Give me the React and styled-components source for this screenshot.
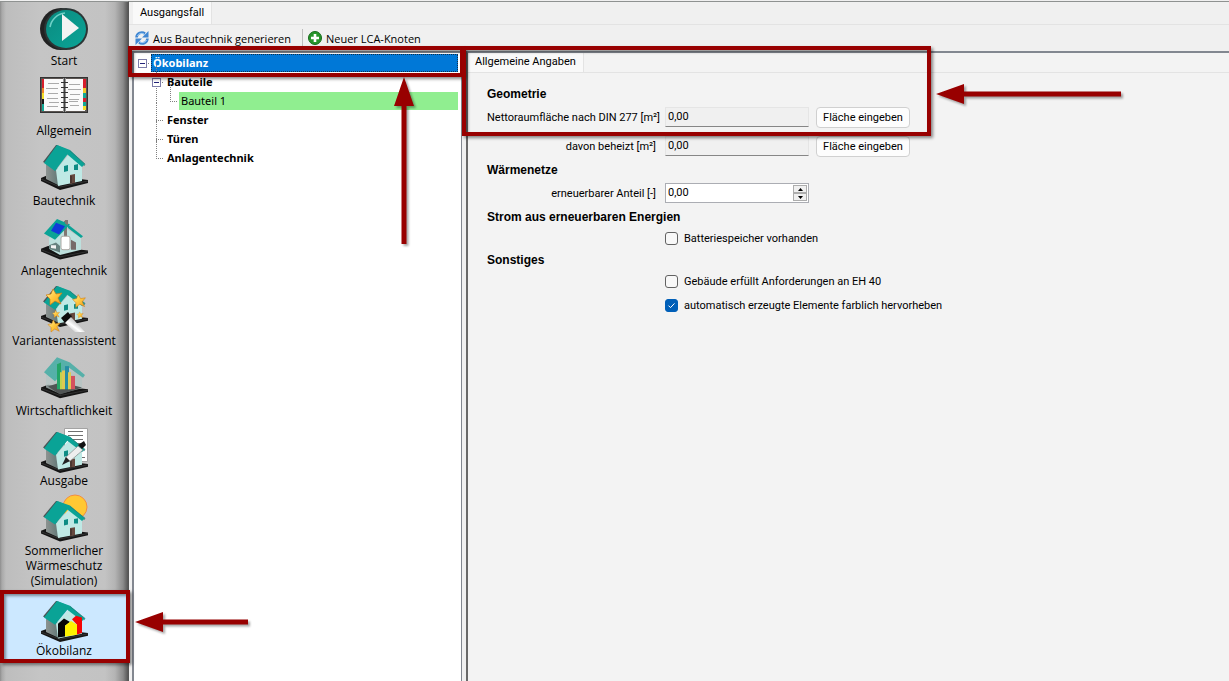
import React, { useState } from 'react';
import styled, { createGlobalStyle } from 'styled-components';

const GlobalStyle = createGlobalStyle`
  * {
    box-sizing: border-box;
  }
  body {
    margin: 0;
    background: #f0f0f0;
    color: #000;
    font-family: 'Open Sans', 'Noto Sans', sans-serif;
    font-size: 12px;
    overflow: hidden;
  }
  button,
  input {
    font: inherit;
    color: inherit;
  }
`;

// Layout
const Window = styled.div`
  display: flex;
  min-height: 100vh;
  border-top: 1px solid #f0f0f0;
`;

const Sidebar = styled.nav`
  flex: 0 0 129px;
  border-top: 1px solid #8f9291;
  border-right: 1px solid #555;
  background: linear-gradient(
    to right,
    #8e8e8e 0,
    #a9a9a9 2px,
    #bdbdbd 6px,
    #c5c5c5 40px,
    #c3c3c3 105px,
    #b4b4b4 115px,
    #8b8b8b 123px,
    #555 128px
  );
`;

const Main = styled.main`
  flex: 1;
  min-width: 0;
  display: flex;
  flex-direction: column;
  border-top: 1px solid #8f9291;
`;

const Panels = styled.div`
  flex: 1;
  display: flex;
  gap: 4px;
  padding-left: 3px;
`;

// Sidebar entries
const NavItem = styled.button`
  position: relative;
  display: flex;
  flex-direction: column;
  align-items: center;
  width: 100%;
  padding: 4px 0;
  border: none;
  background: ${props => (props.$active ? '#cce8ff' : 'transparent')};
  line-height: 15px;
  white-space: pre-line;

  svg {
    display: block;
    overflow: visible;
  }
`;

// Red marker frames and arrows
const Frame = styled.span`
  position: absolute;
  inset: ${props => props.$inset};
  width: ${props => props.$width || 'auto'};
  height: ${props => props.$height || 'auto'};
  z-index: 2;
  border: 4px solid #980000;
  box-shadow: 2px 2px 3px rgba(0, 0, 0, 0.45), inset 2px 2px 3px rgba(0, 0, 0, 0.4);
  pointer-events: none;
`;

const ArrowSvg = styled.svg`
  position: absolute;
  left: ${props => props.$left};
  top: ${props => props.$top};
  z-index: 3;
  overflow: visible;
  pointer-events: none;
  filter: drop-shadow(2px 2px 1px rgba(0, 0, 0, 0.35));
`;

// Tabs and toolbar
const TabBar = styled.div`
  display: flex;
  height: ${props => props.$height};
  padding-left: ${props => props.$indent};
  border-bottom: 1px solid #e3e3e3;
`;

const Tab = styled.button`
  padding: 0 7px 2px;
  border: none;
  border-right: 1px solid #e3e3e3;
  background: #f9f9f9;
  font-family: Roboto, 'Liberation Sans', sans-serif;
  font-size: 11px;
`;

const Toolbar = styled.div`
  display: flex;
  align-items: center;
  height: 26px;
  padding-left: 6px;
`;

const ToolButton = styled.button`
  display: flex;
  align-items: center;
  gap: 4px;
  padding: 0;
  border: none;
  background: transparent;
  font-size: 11px;
  white-space: nowrap;
`;

const ToolDivider = styled.span`
  width: 1px;
  height: 18px;
  margin: 0 5px 0 11px;
  background: #bdbdbd;
`;

// Tree
const TreePanel = styled.section`
  flex: 0 0 330px;
  padding-top: 1px;
  border: 2px solid #828790;
  border-bottom: none;
  border-right-width: 1px;
  background: #fff;
`;

const TreeList = styled.ul`
  list-style: none;
  margin: 0;
  padding: 0 0 0 ${props => (props.$nested ? '14px' : '0')};
`;

const TreeNode = styled.li`
  position: relative;

  &::before {
    content: '';
    position: absolute;
    left: 8px;
    top: 9px;
    width: 7px;
    border-top: 1px dotted #808080;
  }

  ul > &::after {
    content: '';
    position: absolute;
    left: 8px;
    top: -8px;
    height: 100%;
    border-left: 1px dotted #808080;
    display: ${props => (props.$root ? 'none' : 'block')};
  }

  ul > &:last-child::after {
    height: 18px;
  }
`;

const TreeRow = styled.div`
  position: relative;
  display: flex;
  align-items: center;
  height: 19px;
  padding: 0 3px 1px 4px;
`;

const Expander = styled.button`
  position: relative;
  z-index: 1;
  width: 9px;
  height: 9px;
  margin-right: 4px;
  padding: 0;
  border: 1px solid #7c7ca8;
  background: linear-gradient(#24247a, #24247a) center / 5px 1px no-repeat #fff;
`;

const LeafSpace = styled.span`
  width: 13px;
`;

const TreeLabel = styled.span`
  flex: 1;
  padding: 0 2px;
  line-height: 18px;
  font-family: 'Noto Sans', sans-serif;
  font-size: 11px;
  font-weight: ${props => (props.$bold ? 700 : 400)};
  color: ${props => (props.$selected ? '#fff' : '#000')};
  background: ${props => (props.$selected ? '#0078d7' : props.$marked ? '#90ee90' : 'transparent')};
  outline: ${props => (props.$selected ? '1px dotted #10304e' : 'none')};
  outline-offset: -1px;
`;

// Detail form
const DetailPanel = styled.section`
  position: relative;
  flex: 1;
  min-width: 0;
  border-top: 2px solid #828790;
  border-left: 2px solid #696969;
  background: #f3f3f3;
`;

const Form = styled.form`
  display: flex;
  flex-direction: column;
  gap: 3px;
  padding: 11px 19px;
  font-family: Roboto, 'Liberation Sans', sans-serif;
  font-size: 11px;
`;

const Group = styled.fieldset`
  display: flex;
  flex-direction: column;
  gap: ${props => props.$gap || '7px'};
  margin: 0;
  padding: 0;
  border: none;
  min-width: 0;
`;

const GroupTitle = styled.legend`
  padding: 0;
  margin-bottom: 2px;
  font-family: 'Liberation Sans', Arial, sans-serif;
  font-size: 12px;
  font-weight: 700;
  line-height: 20px;
`;

const FieldRow = styled.div`
  display: grid;
  grid-template-columns: 171px 144px 94px;
  column-gap: 7px;
  align-items: center;
  height: 22px;
`;

const FieldLabel = styled.label`
  padding-right: 2px;
  text-align: right;
  white-space: nowrap;
`;

const ReadonlyInput = styled.input`
  width: 100%;
  height: 20px;
  padding: 0 2px 1px;
  border: 1px solid #e5e5e5;
  border-bottom-color: #868686;
  background: #f0f0f0;
  outline: none;
`;

const FormButton = styled.button`
  height: 21px;
  padding: 0;
  border: 1px solid #d0d0d0;
  border-radius: 4px;
  background: #fdfdfd;
  white-space: nowrap;
`;

const SpinBox = styled.div`
  display: flex;
  height: 20px;
  padding: 1px;
  border: 1px solid #abadb3;
  background: #fff;
`;

const SpinInput = styled.input`
  flex: 1;
  min-width: 0;
  padding: 0 0 2px 1px;
  border: none;
  background: transparent;
  outline: none;
`;

const SpinButtons = styled.div`
  display: grid;
  grid-template-rows: 1fr 1fr;
  width: 14px;
`;

const SpinButton = styled.button`
  display: flex;
  align-items: center;
  justify-content: center;
  padding: 0;
  border: 1px solid #adadad;
  background: #f0f0f0;
`;

const CheckLabel = styled.label`
  display: flex;
  align-items: center;
  gap: 6px;
  height: 18px;
  padding-left: 178px;
`;

const CheckBox = styled.input`
  appearance: none;
  width: 13px;
  height: 13px;
  margin: 0;
  border: 1px solid #626262;
  border-radius: 3px;
  background: #f8f8f8;

  &:checked {
    border-color: #005fb8;
    background: #005fb8
      url("data:image/svg+xml,%3Csvg xmlns='http://www.w3.org/2000/svg' viewBox='0 0 11 11'%3E%3Cpath d='M2.5 5.6l2 2 4-4.2' fill='none' stroke='white'/%3E%3C/svg%3E");
  }
`;

// Icons
const HouseBase = () => (
  <>
    <path d="M1 32 8 29 48 34V37L20 44 1 35Z" fill="#151515" />
    <path d="M1 33 20 41 48 35" fill="none" stroke="#3b3b3b" strokeWidth="0.8" />
  </>
);

const HouseBody = () => (
  <>
    <path d="M6 17 20 23V40L6 33Z" fill="url(#wall)" />
    <path d="M16 24 30 7 42 19V35L18 40Z" fill="#bfe9e5" />
    <path d="M3 16 16 -1 18 -1 5 17Z" fill="#4b5355" />
    <path d="M17 -1 30 5 15 25 4 17Z" fill="#0aa396" />
    <path d="M17 -1 30 4 45 18 42 21 28 9Z" fill="#0aa396" />
    <path d="M30 5 45 18 44 20" fill="none" stroke="#2a7771" strokeWidth="0.7" />
  </>
);

const HouseOpenings = () => (
  <>
    <path d="M24 20 28 19V25L24 26Z" fill="#0d8c84" />
    <path d="M34 19 38 18V24L34 24Z" fill="#0d8c84" />
    <path d="M30 29 35 28V37L30 38Z" fill="#66493f" />
    <path d="M31 30V37" stroke="#2d2422" />
  </>
);

const House = () => (
  <>
    <HouseBase />
    <HouseBody />
    <HouseOpenings />
  </>
);

const Star = ({ x, y, s }) => (
  <path
    transform={`translate(${x} ${y}) scale(${s})`}
    d="M-1 -8 2 -3 8 -4 4 1 7 7 1 4 -4 8 -4 2 -8 -2 -3 -3Z"
    fill="url(#gold)"
    stroke="#cf7c13"
    strokeWidth="0.7"
  />
);

const ICONS = {
  start: (
    <>
      <ellipse cx="21" cy="23" rx="21" ry="21" fill="#222" />
      <ellipse cx="26" cy="23" rx="22" ry="21" fill="#2c3535" />
      <ellipse cx="26" cy="23" rx="20" ry="19" fill="url(#play)" />
      <path d="M10 21A17 17 0 0 1 25 7" fill="none" stroke="#6fd1c7" strokeWidth="1.6" />
      <path d="M22 8 39 22 22 35Z" fill="#f3f3f3" />
    </>
  ),
  allgemein: (
    <g transform="translate(0 -3)">
      <rect x="0.5" y="4.5" width="47" height="35" fill="#5b5552" stroke="#333" />
      <rect x="3" y="6" width="42" height="32" fill="#fafafa" />
      <path d="M2 6h2v9H2z" fill="#d81e2c" />
      <path d="M2 15h2v5H2z" fill="#f08326" />
      <path d="M2 20h2v6H2z" fill="#f4df28" />
      <path d="M2 26h2v5H2z" fill="#191919" />
      <path d="M2 31h2v7H2z" fill="#13a896" />
      <path d="M43 6h3v9h-3z" fill="#d81e2c" />
      <path d="M43 15h3v5h-3z" fill="#f4c928" />
      <path d="M43 20h3v5h-3z" fill="#13a896" />
      <path d="M43 25h3v4h-3z" fill="#d81e2c" />
      <path d="M43 29h3v4h-3z" fill="#13a896" />
      <path d="M43 33h3v4h-3z" fill="#f4df28" />
      <path d="M8 10.5h11M6 15.5h12M8 20.5h10M7 25.5h11M9 29.5h10M7 33.5h11M29 11.5h11M28 16.5h13M30 21.5h10M29 26.5h10M29 28.5h9M30 32.5h9" stroke="#aaa" />
      <path d="M24.5 5V39" stroke="#999" strokeWidth="3" />
      <path d="M24.5 5V39" stroke="#444" />
      <path d="M21 9.5h7M21 14.5h7M21 19.5h7M21 24.5h7M21 29.5h7M21 34.5h7" stroke="#333" />
    </g>
  ),
  bautechnik: <House />,
  anlagentechnik: (
    <g transform="translate(0 4) scale(1 0.9)">
      <HouseBase />
      <path d="M9 20 24 8 41 20V33L20 39 9 32Z" fill="#bde0dd" />
      <path d="M9 28 16 25 20 29V36L9 32Z" fill="#66817f" />
      <path d="M11 28h5v4l-5-1z" fill="#f4f4f4" />
      <path d="M24 1h3v20h-3z" fill="#827773" />
      <path d="M31 22 36 25V33L31 33Z" fill="#776b69" />
      <path d="M17 -1 30 5 15 22 4 15Z" fill="#0aa396" />
      <path d="M28 5 43 18 41 20 28 9Z" fill="#0aa396" />
      <path d="M16 3 25 7 19 16 11 12Z" fill="#1139d9" />
      <rect x="21" y="18" width="9" height="15" rx="2" fill="#fff" stroke="#a9a39f" />
      <path d="M25 0h3v6l-3-2z" fill="#827773" />
    </g>
  ),
  varianten: (
    <>
      <g transform="translate(0 1) scale(1 0.91)">
        <House />
      </g>
      <Star x={14} y={11} s={1} />
      <Star x={39} y={15} s={0.8} />
      <Star x={16} y={28} s={0.45} />
      <Star x={40} y={29} s={0.4} />
      <Star x={14} y={40} s={0.75} />
      <path d="M21 32 28 26 32 31 25 37Z" fill="#0c0c0c" />
      <path d="M25 37 31 31 45 46H35Z" fill="url(#wand)" />
    </>
  ),
  wirtschaft: (
    <g transform="translate(0 3) scale(1 0.89)">
      <HouseBase />
      <path d="M6 17 18 8 42 18V33L20 39 6 32Z" fill="#b4c4c3" opacity="0.7" />
      <path d="M17 -2 30 4 45 18 43 21 28 9 15 25 4 15Z" fill="#43ada5" opacity="0.85" />
      <path d="M8 31 21 26 42 32 20 40Z" fill="#505555" />
      <path d="M17 6 21 4V34H17Z" fill="#22a567" />
      <path d="M20 15h2v19h-2z" fill="#c4d34c" />
      <path d="M25 8h4v26h-4z" fill="#258da4" />
      <path d="M22 13h3v21h-3zM28 15h3v19h-3z" fill="#dec953" />
      <path d="M31 19h4v15h-4z" fill="#d5515e" />
    </g>
  ),
  ausgabe: (
    <>
      <path d="M24.5 2.5h23v33h-23z" fill="#fff" stroke="#a3a3a3" />
      <path d="M28 5.5h15M28 9.5h15M28 13.5h15M34 17.5h9M38 31.5h7" stroke="#6f6f6f" />
      <g transform="translate(0 7) scale(1 0.91)">
        <House />
      </g>
      <path d="M38 20 43 24 29 36 25 32Z" fill="#eee" stroke="#777" strokeWidth="0.6" />
      <path d="M38 19 44 15 46 19 42 23Z" fill="#111" />
      <path d="M26 31 30 35 22 39Z" fill="#222" />
    </>
  ),
  sommer: (
    <>
      <circle cx="35" cy="11" r="12" fill="#ffc833" stroke="#f28d42" />
      <g transform="translate(0 6) scale(1 0.9)">
        <House />
      </g>
    </>
  ),
  oekobilanz: (
    <g transform="translate(0 6) scale(1 0.91)">
      <HouseBase />
      <HouseBody />
      <path d="M18 24 24 18 30 22 25 26V38L18 39Z" fill="#060606" />
      <path d="M32 19 36 15 42 17V34L36 36 37 25Z" fill="#f40505" />
      <path d="M25 26 31 21 37 25V36L25 38Z" fill="#fff200" />
    </g>
  ),
};

const DefsSvg = styled.svg`
  position: absolute;
`;

const IconDefs = () => (
  <DefsSvg width="0" height="0" aria-hidden="true">
    <defs>
      <linearGradient id="wall">
        <stop offset="0" stopColor="#8d9391" />
        <stop offset="1" stopColor="#5d7573" />
      </linearGradient>
      <linearGradient id="gold" x2="1" y2="1">
        <stop offset="0" stopColor="#fff3a2" />
        <stop offset="0.5" stopColor="#ffc83d" />
        <stop offset="1" stopColor="#ee9a22" />
      </linearGradient>
      <linearGradient id="wand" x1="0" y1="1" x2="1" y2="0">
        <stop offset="0" stopColor="#999" />
        <stop offset="0.4" stopColor="#fff" />
        <stop offset="1" stopColor="#666" />
      </linearGradient>
      <linearGradient id="play" x2="1" y2="1">
        <stop offset="0" stopColor="#0b8a7f" />
        <stop offset="1" stopColor="#0aa497" />
      </linearGradient>
    </defs>
  </DefsSvg>
);

const RefreshIcon = () => (
  <svg width="14" height="14" viewBox="0 0 14 14">
    <path d="M1.5 6.5A5.3 5.3 0 0 1 10 2.6" fill="none" stroke="#3f86d2" strokeWidth="2.6" />
    <path d="M13.5 0V6.5H7Z" fill="#3f86d2" />
    <path d="M12.5 7.5A5.3 5.3 0 0 1 4 11.4" fill="none" stroke="#3f86d2" strokeWidth="2.6" />
    <path d="M0.5 14V7.5H7Z" fill="#3f86d2" />
    <path d="M2.5 5A4.5 4.5 0 0 1 9 3M11.5 9A4.5 4.5 0 0 1 5 11" fill="none" stroke="#a9d2f7" />
  </svg>
);

const PlusIcon = () => (
  <svg width="14" height="14" viewBox="0 0 14 14">
    <circle cx="7" cy="7" r="6.5" fill="#27952a" stroke="#176b1d" />
    <path d="M7 3V11M3 7H11" stroke="#fff" strokeWidth="2.6" />
  </svg>
);

const LeftArrow = ({ length, left, top }) => (
  <ArrowSvg $left={left} $top={top} width={length} height="20" aria-hidden="true">
    <path d={`M0 10 28 0V7.5H${length}V12.5H28V20Z`} fill="#980000" />
  </ArrowSvg>
);

const UpArrow = ({ length, left, top }) => (
  <ArrowSvg $left={left} $top={top} width="20" height={length} aria-hidden="true">
    <path d={`M10 0 20 29H12.5V${length}H7.5V29H0Z`} fill="#980000" />
  </ArrowSvg>
);

const NAV_ITEMS = [
  { id: 'start', label: 'Start' },
  { id: 'allgemein', label: 'Allgemein' },
  { id: 'bautechnik', label: 'Bautechnik' },
  { id: 'anlagentechnik', label: 'Anlagentechnik' },
  { id: 'varianten', label: 'Variantenassistent' },
  { id: 'wirtschaft', label: 'Wirtschaftlichkeit' },
  { id: 'ausgabe', label: 'Ausgabe' },
  { id: 'sommer', label: 'Sommerlicher\nWärmeschutz\n(Simulation)' },
  { id: 'oekobilanz', label: 'Ökobilanz', active: true },
];

const TREE = {
  label: 'Ökobilanz',
  bold: true,
  selected: true,
  children: [
    { label: 'Bauteile', bold: true, children: [{ label: 'Bauteil 1', marked: true }] },
    { label: 'Fenster', bold: true },
    { label: 'Türen', bold: true },
    { label: 'Anlagentechnik', bold: true },
  ],
};

function TreeItem({ node, root }) {
  const [open, setOpen] = useState(true);

  return (
    <TreeNode $root={root}>
      <TreeRow>
        {node.children ? (
          <Expander type="button" aria-label={node.label} aria-expanded={open} onClick={() => setOpen(!open)} />
        ) : (
          <LeafSpace />
        )}
        <TreeLabel $bold={node.bold} $selected={node.selected} $marked={node.marked}>
          {node.label}
        </TreeLabel>
        {node.selected && (
          <>
            <Frame $inset="-8px -3px -4px -6px" />
            <UpArrow left="260px" top="23px" length={167} />
          </>
        )}
      </TreeRow>
      {node.children && open && (
        <TreeList $nested>
          {node.children.map(child => (
            <TreeItem key={child.label} node={child} />
          ))}
        </TreeList>
      )}
    </TreeNode>
  );
}

function AreaField({ id, label }) {
  return (
    <FieldRow>
      <FieldLabel htmlFor={id}>{label}</FieldLabel>
      <ReadonlyInput id={id} value="0,00" readOnly />
      <FormButton type="button">Fläche eingeben</FormButton>
    </FieldRow>
  );
}

function App() {
  const [share, setShare] = useState('0,00');

  const stepShare = (step) => {
    const value = Math.max(0, parseFloat(share.replace(',', '.')) + step);
    setShare(value.toFixed(2).replace('.', ','));
  };

  return (
    <Window>
      <GlobalStyle />
      <IconDefs />
      <Sidebar>
        {NAV_ITEMS.map(item => (
          <NavItem key={item.id} type="button" $active={item.active}>
            <svg width="48" height="47" viewBox="0 0 48 47" aria-hidden="true">
              {ICONS[item.id]}
            </svg>
            {item.label}
            {item.active && (
              <>
                <Frame $inset="-2px -2px -1px 0" />
                <LeftArrow left="135px" top="20px" length={113} />
              </>
            )}
          </NavItem>
        ))}
      </Sidebar>

      <Main>
        <TabBar $height="23px" $indent="4px">
          <Tab type="button">Ausgangsfall</Tab>
        </TabBar>
        <Toolbar>
          <ToolButton type="button"><RefreshIcon />Aus Bautechnik generieren</ToolButton>
          <ToolDivider />
          <ToolButton type="button"><PlusIcon />Neuer LCA-Knoten</ToolButton>
        </Toolbar>

        <Panels>
          <TreePanel>
            <TreeList>
              <TreeItem node={TREE} root />
            </TreeList>
          </TreePanel>

          <DetailPanel>
            <TabBar $height="20px" $indent="0">
              <Tab type="button">Allgemeine Angaben</Tab>
            </TabBar>
            <Form>
              <Group>
                <GroupTitle>Geometrie</GroupTitle>
                <AreaField id="net-area" label="Nettoraumfläche nach DIN 277 [m²]" />
                <AreaField id="heated-area" label="davon beheizt [m²]" />
              </Group>

              <Group>
                <GroupTitle>Wärmenetze</GroupTitle>
                <FieldRow>
                  <FieldLabel htmlFor="share">erneuerbarer Anteil [-]</FieldLabel>
                  <SpinBox>
                    <SpinInput id="share" value={share} onChange={(e) => setShare(e.target.value)} />
                    <SpinButtons>
                      <SpinButton type="button" aria-label="mehr" onClick={() => stepShare(0.01)}>
                        <svg width="5" height="3"><path d="M0 3 2.5 0 5 3Z" /></svg>
                      </SpinButton>
                      <SpinButton type="button" aria-label="weniger" onClick={() => stepShare(-0.01)}>
                        <svg width="5" height="3"><path d="M0 0H5L2.5 3Z" /></svg>
                      </SpinButton>
                    </SpinButtons>
                  </SpinBox>
                </FieldRow>
              </Group>

              <Group>
                <GroupTitle>Strom aus erneuerbaren Energien</GroupTitle>
                <CheckLabel><CheckBox type="checkbox" />Batteriespeicher vorhanden</CheckLabel>
              </Group>

              <Group $gap="6px">
                <GroupTitle>Sonstiges</GroupTitle>
                <CheckLabel><CheckBox type="checkbox" />Gebäude erfüllt Anforderungen an EH 40</CheckLabel>
                <CheckLabel>
                  <CheckBox type="checkbox" defaultChecked />
                  automatisch erzeugte Elemente farblich hervorheben
                </CheckLabel>
              </Group>
            </Form>
            <Frame $inset="-7px auto auto -6px" $width="469px" $height="90px" />
            <LeftArrow left="468px" top="31px" length={185} />
          </DetailPanel>
        </Panels>
      </Main>
    </Window>
  );
}

export default App;
